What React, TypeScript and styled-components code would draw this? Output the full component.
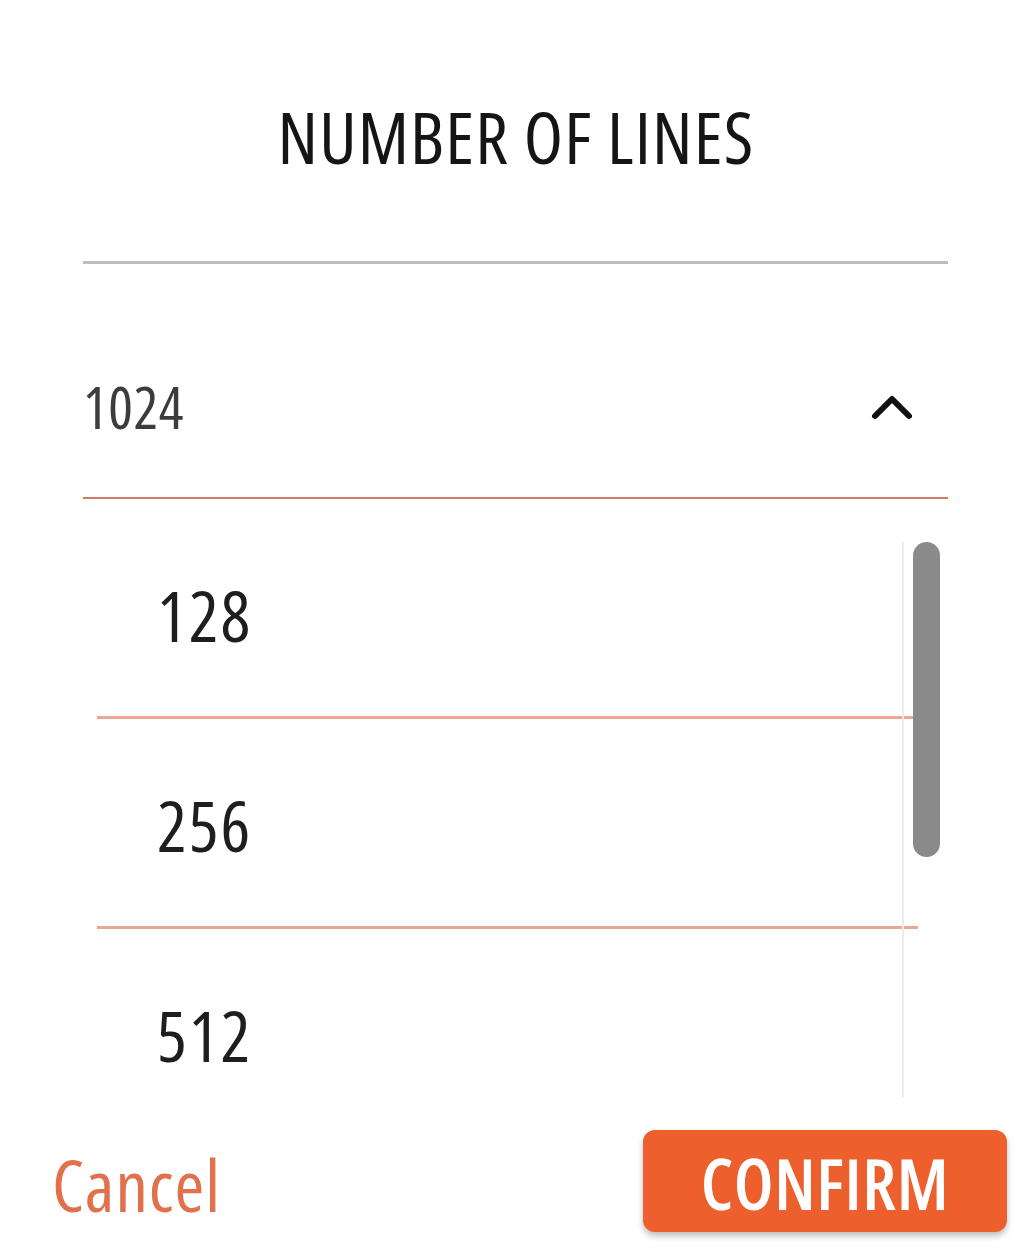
import styled, { createGlobalStyle } from 'styled-components';

const GlobalStyle = createGlobalStyle`
  html, body {
    margin: 0;
    padding: 0;
    background: #ffffff;
  }
  body {
    font-family: 'Open Sans', 'DejaVu Sans Condensed', sans-serif;
  }
`;

const options = ['128', '256', '512'];

const App = () => {
  return (
    <>
      <GlobalStyle />
      <Page>
        <Title>NUMBER OF LINES</Title>
        <Divider />
        <SelectRow>
          <SelectValue>1024</SelectValue>
          <Chevron viewBox="0 0 44 28" aria-hidden>
            <path d="M5 23 L22 6 L39 23" fill="none" stroke="#111" strokeWidth="6" strokeLinecap="round" strokeLinejoin="round" />
          </Chevron>
        </SelectRow>
        <ListArea>
          <List>
            {options.map((o) => (
              <Option key={o}>{o}</Option>
            ))}
          </List>
          <ScrollTrack />
          <ScrollThumb />
        </ListArea>
        <Footer>
          <CancelButton>Cancel</CancelButton>
          <ConfirmButton>CONFIRM</ConfirmButton>
        </Footer>
      </Page>
    </>
  );
};

export default App;

const Page = styled.div`
  width: 1024px;
  height: 1256px;
  display: flex;
  flex-direction: column;
  overflow: hidden;
  font-stretch: 75%;
`;

const Title = styled.h1`
  margin: 100px 0 0;
  font-size: 72px;
  font-weight: 400;
  line-height: 1;
  letter-spacing: 1.2px;
  color: #151515;
  text-align: center;
  padding-left: 8px;
`;

const Divider = styled.div`
  margin: 89px 76px 0 83px;
  height: 3px;
  background: #bdbdbd;
`;

const SelectRow = styled.div`
  margin: 0 76px 0 83px;
  padding: 114px 34px 61px 0;
  display: flex;
  align-items: center;
  justify-content: space-between;
  border-bottom: 2px solid #cf7d5e;
`;

const SelectValue = styled.span`
  font-size: 58px;
  line-height: 1;
  letter-spacing: 0.6px;
  color: #3c3c3c;
`;

const Chevron = styled.svg`
  width: 44px;
  height: 28px;
`;

const ListArea = styled.div`
  position: relative;
  margin: 10px 0 0 97px;
  width: 850px;
  height: 588px;
`;

const List = styled.div`
  width: 821px;
  height: 100%;
  display: flex;
  flex-direction: column;
  overflow: hidden;
`;

const Option = styled.div`
  height: 210px;
  padding: 4px 0 0 60px;
  box-sizing: border-box;
  display: flex;
  align-items: center;
  font-size: 70px;
  line-height: 1;
  letter-spacing: 2px;
  color: #1e1e1e;
  border-bottom: 3px solid #e9a794;
  flex-shrink: 0;
`;

const ScrollTrack = styled.div`
  position: absolute;
  left: 805px;
  top: 33px;
  bottom: 0;
  width: 2px;
  background: #ececec;
`;

const ScrollThumb = styled.div`
  position: absolute;
  left: 816px;
  top: 33px;
  width: 27px;
  height: 315px;
  border-radius: 14px;
  background: #8a8a8a;
`;

const Footer = styled.div`
  margin-top: 33px;
  padding: 0 17px 0 52px;
  display: flex;
  align-items: center;
  justify-content: space-between;
`;

const CancelButton = styled.button`
  border: none;
  background: none;
  padding: 6px 0 0;
  font-family: inherit;
  font-stretch: 75%;
  font-size: 72px;
  line-height: 1;
  letter-spacing: 1px;
  color: #e0714c;
  cursor: pointer;
`;

const ConfirmButton = styled.button`
  width: 364px;
  height: 102px;
  border: none;
  border-radius: 12px;
  background: #ed5f2c;
  box-shadow: 0 4px 6px rgba(0, 0, 0, 0.25);
  font-family: inherit;
  font-stretch: 75%;
  font-size: 70px;
  font-weight: 600;
  line-height: 1;
  letter-spacing: 0.6px;
  color: #ffffff;
  padding: 4px 0 0;
  cursor: pointer;
`;
